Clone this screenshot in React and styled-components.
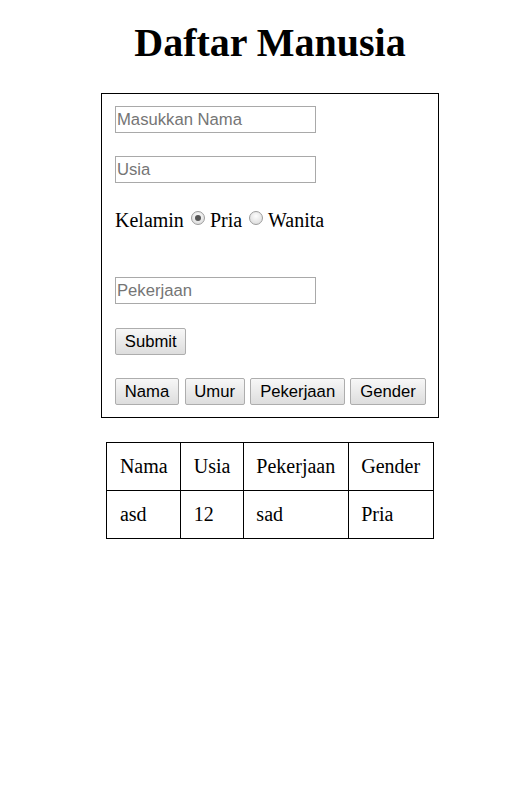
import styled, { createGlobalStyle } from "styled-components";

const GlobalStyle = createGlobalStyle`
  html, body {
    margin: 0;
    padding: 0;
    background: #fff;
    overflow-x: hidden;
  }
  body {
    font-family: "Liberation Serif", "Times New Roman", serif;
    color: #000;
  }
`;

const Page = styled.div`
  width: 540px;
  display: flex;
  flex-direction: column;
  align-items: center;
`;

const Title = styled.h1`
  margin: 20px 0 27px;
  font-size: 40px;
  line-height: 46px;
  font-weight: bold;
`;

const FormBox = styled.form`
  box-sizing: border-box;
  width: 338px;
  border: 1px solid #000;
  padding: 12px 13px 12px;
  display: flex;
  flex-direction: column;
  align-items: flex-start;
`;

const Input = styled.input`
  box-sizing: border-box;
  width: 201px;
  height: 27px;
  margin: 0 0 ${(props) => props.$gap || 0}px;
  padding: 0 1px;
  border: 1px solid #a9a9a9;
  font-family: "Liberation Sans", Arial, sans-serif;
  font-size: 16.67px;
  outline: none;
  &::placeholder {
    color: #757575;
  }
`;

const GenderRow = styled.div`
  display: flex;
  align-items: center;
  height: 23px;
  font-size: 20px;
  line-height: 23px;
  margin-bottom: 45px;
`;

const Radio = styled.input.attrs({ type: "radio", name: "kelamin" })`
  appearance: none;
  box-sizing: border-box;
  width: 14px;
  height: 14px;
  margin: 2px 5px 0 7px;
  align-self: flex-start;
  border-radius: 50%;
  border: 1px solid #9c9c9c;
  background: radial-gradient(circle at 50% 35%, #fdfdfd, #d6d6d6);
  position: relative;
  &:checked::after {
    content: "";
    position: absolute;
    left: 3px;
    top: 3px;
    width: 6px;
    height: 6px;
    border-radius: 50%;
    background: #555;
  }
`;

const Button = styled.button`
  box-sizing: border-box;
  height: 27px;
  padding: 0 8.8px;
  border: 1px solid #adadad;
  border-radius: 2px;
  background: linear-gradient(#f7f7f7, #dddddd);
  font-family: "Liberation Sans", Arial, sans-serif;
  font-size: 16.67px;
  color: #000;
  margin-bottom: ${(props) => props.$gap || 0}px;
`;

const ButtonRow = styled.div`
  display: flex;
  gap: 5.5px;
`;

const Table = styled.table`
  margin-top: 24px;
  border-collapse: collapse;
  border: 1px solid #000;
  font-size: 20px;
  line-height: 23px;
  td {
    border: 1px solid #000;
    padding: 12px 12.5px;
    white-space: nowrap;
  }
`;

export default function App() {
  const rows = [{ nama: "asd", usia: "12", kerja: "sad", gender: "Pria" }];
  return (
    <Page>
      <GlobalStyle />
      <Title>Daftar Manusia</Title>
      <FormBox onSubmit={(e) => e.preventDefault()}>
        <Input placeholder="Masukkan Nama" $gap={23} />
        <Input placeholder="Usia" $gap={26} />
        <GenderRow>
          Kelamin
          <Radio defaultChecked />
          Pria
          <Radio />
          Wanita
        </GenderRow>
        <Input placeholder="Pekerjaan" $gap={24} />
        <Button type="submit" $gap={23}>
          Submit
        </Button>
        <ButtonRow>
          <Button type="button">Nama</Button>
          <Button type="button">Umur</Button>
          <Button type="button">Pekerjaan</Button>
          <Button type="button">Gender</Button>
        </ButtonRow>
      </FormBox>
      <Table>
        <tbody>
          <tr>
            <td>Nama</td>
            <td>Usia</td>
            <td>Pekerjaan</td>
            <td>Gender</td>
          </tr>
          {rows.map((r, i) => (
            <tr key={i}>
              <td>{r.nama}</td>
              <td>{r.usia}</td>
              <td>{r.kerja}</td>
              <td>{r.gender}</td>
            </tr>
          ))}
        </tbody>
      </Table>
    </Page>
  );
}
